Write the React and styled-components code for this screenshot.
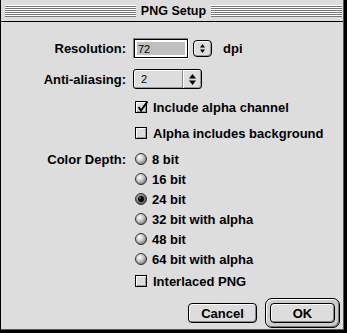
import styled, { createGlobalStyle } from "styled-components";

const GlobalStyle = createGlobalStyle`
  body {
    margin: 0;
    background: #000;
  }
  * {
    box-sizing: border-box;
  }
`;

const Window = styled.div`
  width: 347px;
  height: 333px;
  background: #000;
  padding: 0 3px 3px 0;
  display: flex;
  font-family: "Liberation Sans", Arial, sans-serif;
  color: #000;
`;

const Frame = styled.div`
  flex: 1;
  display: flex;
  flex-direction: column;
  background: #dddddd;
  border-left: 1px solid #000;
  border-right: 1px solid #555;
  border-bottom: 1px solid #555;
`;

const TitleBar = styled.div`
  height: 22px;
  flex-shrink: 0;
  display: flex;
  align-items: center;
  gap: 5px;
  padding: 0 1px 0 4px;
  border-bottom: 1px solid #000;
  background: #dddddd;
`;

const Stripes = styled.div`
  flex: 1;
  height: 12px;
  background: repeating-linear-gradient(
    to bottom,
    #ffffff 0 1px,
    #777777 1px 2px
  );
`;

const Title = styled.div`
  font-weight: 700;
  font-size: 12.5px;
  line-height: 14px;
`;

const Body = styled.div`
  flex: 1;
  display: flex;
  flex-direction: column;
  padding: 16px 3px 0 0;
`;

const Row = styled.div`
  display: grid;
  grid-template-columns: 125px 1fr;
  column-gap: 7px;
  align-items: center;
  height: ${(p) => p.$h || 20}px;
  margin-top: ${(p) => p.$gap || 0}px;
`;

const Label = styled.div`
  text-align: right;
  font-weight: 700;
  font-size: 13px;
  white-space: nowrap;
`;

const Controls = styled.div`
  display: flex;
  align-items: center;
  height: 100%;
`;

const FieldOuter = styled.div`
  width: 56px;
  height: 21px;
  border: 1px solid;
  border-color: #808080 #ffffff #ffffff #808080;
`;

const FieldInner = styled.div`
  height: 100%;
  border: 1px solid #000;
  background: #fff;
  padding: 2px;
`;

const FieldText = styled.div`
  height: 100%;
  background: #c0c0c0;
  font-size: 11px;
  padding-left: 1px;
  display: flex;
  align-items: center;
`;

const Stepper = styled.div`
  width: 19px;
  height: 17px;
  margin-left: 4px;
  border: 1px solid #000;
  border-radius: 4px;
  background: #dddddd;
  box-shadow: inset 1px 1px 0 #fff, inset -1px -1px 0 #999;
  display: flex;
  align-items: center;
  justify-content: center;
`;

const Unit = styled.span`
  margin-left: 11px;
  font-weight: 700;
  font-size: 13px;
`;

const Popup = styled.div`
  width: 69px;
  height: 20px;
  border: 1px solid #000;
  border-radius: 3px;
  background: #dddddd;
  box-shadow: inset 1px 1px 0 #fff, inset -1px -1px 0 #999;
  display: flex;
`;

const PopupValue = styled.div`
  flex: 1;
  padding-left: 7px;
  font-size: 11px;
  display: flex;
  align-items: center;
`;

const PopupArrows = styled.div`
  width: 19px;
  border-left: 1px solid #888;
  box-shadow: inset 1px 0 0 #fff;
  display: flex;
  align-items: center;
  justify-content: center;
`;

const Option = styled.label`
  display: flex;
  align-items: center;
  gap: ${(p) => p.$gap}px;
  margin-left: 2px;
  font-weight: 700;
  font-size: 13px;
  white-space: nowrap;
`;

const Box = styled.span`
  position: relative;
  width: 12px;
  height: 12px;
  flex-shrink: 0;
  border: 1px solid #000;
  background: #dddddd;
  box-shadow: inset 1px 1px 0 #fff, inset -1px -1px 0 #999;

  svg {
    position: absolute;
    left: 0;
    top: -3px;
  }
`;

const ButtonRow = styled.div`
  display: flex;
  justify-content: flex-end;
  align-items: center;
  gap: 8px;
  height: 30px;
  margin-top: 7px;
`;

const PushButton = styled.button`
  width: ${(p) => p.$w}px;
  height: 20px;
  padding: 0;
  border: 1px solid #000;
  border-radius: 4px;
  background: #dddddd;
  box-shadow: inset 1px 1px 0 #fff, inset -1px -1px 0 #888;
  font-family: inherit;
  font-weight: 700;
  font-size: 13px;
  color: #000;
  display: flex;
  align-items: center;
  justify-content: center;
`;

const DefaultRing = styled.div`
  padding: 4px;
  border: 1px solid #000;
  border-radius: 7px;
  background: #cccccc;
  box-shadow: inset 1px 1px 0 #fff, inset -1px -1px 0 #777;
`;

const Arrows = ({ w, h }) => (
  <svg width={w} height={h} viewBox={`0 0 ${w} ${h}`}>
    <polygon points={`0,${h / 2 - 1} ${w / 2},0 ${w},${h / 2 - 1}`} fill="#000" />
    <polygon points={`0,${h / 2 + 1} ${w},${h / 2 + 1} ${w / 2},${h}`} fill="#000" />
  </svg>
);

const Checkbox = ({ checked, children }) => (
  <Option $gap={6}>
    <Box>
      {checked && (
        <svg width="14" height="14" viewBox="0 0 14 14">
          <path d="M2.5 8 L5 11.5 L11.5 2.5" stroke="#000" strokeWidth="2" fill="none" />
        </svg>
      )}
    </Box>
    {children}
  </Option>
);

const Radio = ({ checked, children }) => (
  <Option $gap={5}>
    <svg width="12" height="12" viewBox="0 0 12 12">
      <defs>
        <radialGradient id="radioOff" cx="38%" cy="35%" r="65%">
          <stop offset="0" stopColor="#ffffff" />
          <stop offset="0.55" stopColor="#c4c4c4" />
          <stop offset="1" stopColor="#7a7a7a" />
        </radialGradient>
        <radialGradient id="radioOn" cx="38%" cy="35%" r="65%">
          <stop offset="0" stopColor="#bbbbbb" />
          <stop offset="1" stopColor="#555555" />
        </radialGradient>
      </defs>
      <circle cx="6" cy="6" r="5.5" fill={checked ? "url(#radioOn)" : "url(#radioOff)"} stroke="#333" />
      {checked && (
        <>
          <circle cx="6" cy="6" r="3" fill="#000" />
          <circle cx="5" cy="5" r="0.9" fill="#777" />
        </>
      )}
    </svg>
    {children}
  </Option>
);

const depths = [
  "8 bit",
  "16 bit",
  "24 bit",
  "32 bit with alpha",
  "48 bit",
  "64 bit with alpha",
];

export default function App() {
  return (
    <>
      <GlobalStyle />
      <Window>
        <Frame>
          <TitleBar>
            <Stripes />
            <Title>PNG Setup</Title>
            <Stripes />
          </TitleBar>
          <Body>
            <Row $h={21}>
              <Label>Resolution:</Label>
              <Controls>
                <FieldOuter>
                  <FieldInner>
                    <FieldText>72</FieldText>
                  </FieldInner>
                </FieldOuter>
                <Stepper>
                  <Arrows w={5} h={9} />
                </Stepper>
                <Unit>dpi</Unit>
              </Controls>
            </Row>
            <Row $gap={10}>
              <Label>Anti-aliasing:</Label>
              <Controls>
                <Popup>
                  <PopupValue>2</PopupValue>
                  <PopupArrows>
                    <Arrows w={7} h={11} />
                  </PopupArrows>
                </Popup>
              </Controls>
            </Row>
            <Row $gap={8}>
              <span />
              <Checkbox checked>Include alpha channel</Checkbox>
            </Row>
            <Row $gap={6}>
              <span />
              <Checkbox>Alpha includes background</Checkbox>
            </Row>
            {depths.map((d, i) => (
              <Row key={d} $gap={i === 0 ? 6 : 0}>
                {i === 0 ? <Label>Color Depth:</Label> : <span />}
                <Radio checked={d === "24 bit"}>{d}</Radio>
              </Row>
            ))}
            <Row $gap={2}>
              <span />
              <Checkbox>Interlaced PNG</Checkbox>
            </Row>
            <ButtonRow>
              <PushButton $w={69}>Cancel</PushButton>
              <DefaultRing>
                <PushButton $w={65}>OK</PushButton>
              </DefaultRing>
            </ButtonRow>
          </Body>
        </Frame>
      </Window>
    </>
  );
}
